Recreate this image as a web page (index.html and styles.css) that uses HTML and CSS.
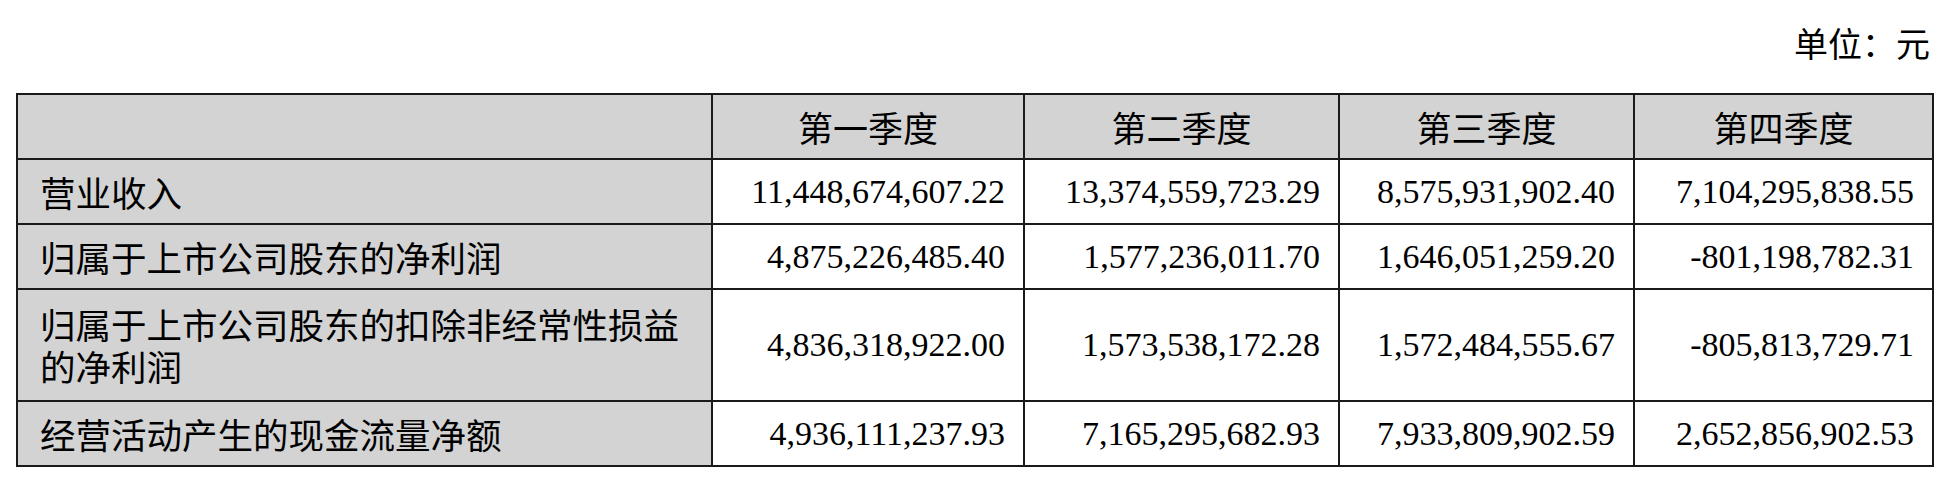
FILE: index.html
```html
<!DOCTYPE html>
<html lang="zh-CN">
<head>
<meta charset="utf-8">
<title>季度财务数据</title>
<link rel="stylesheet" href="styles.css">
</head>
<body>
<div class="page">
  <div class="unit">单位：元</div>
  <table class="fin">
    <colgroup>
      <col class="c-label">
      <col class="c-q1">
      <col class="c-q2">
      <col class="c-q3">
      <col class="c-q4">
    </colgroup>
    <thead>
      <tr>
        <th class="label"></th>
        <th>第一季度</th>
        <th>第二季度</th>
        <th>第三季度</th>
        <th>第四季度</th>
      </tr>
    </thead>
    <tbody>
      <tr>
        <td class="label">营业收入</td>
        <td class="num">11,448,674,607.22</td>
        <td class="num">13,374,559,723.29</td>
        <td class="num">8,575,931,902.40</td>
        <td class="num">7,104,295,838.55</td>
      </tr>
      <tr>
        <td class="label">归属于上市公司股东的净利润</td>
        <td class="num">4,875,226,485.40</td>
        <td class="num">1,577,236,011.70</td>
        <td class="num">1,646,051,259.20</td>
        <td class="num">-801,198,782.31</td>
      </tr>
      <tr class="tall">
        <td class="label">归属于上市公司股东的扣除非经常性损益的净利润</td>
        <td class="num">4,836,318,922.00</td>
        <td class="num">1,573,538,172.28</td>
        <td class="num">1,572,484,555.67</td>
        <td class="num">-805,813,729.71</td>
      </tr>
      <tr>
        <td class="label">经营活动产生的现金流量净额</td>
        <td class="num">4,936,111,237.93</td>
        <td class="num">7,165,295,682.93</td>
        <td class="num">7,933,809,902.59</td>
        <td class="num">2,652,856,902.53</td>
      </tr>
    </tbody>
  </table>
</div>
</body>
</html>
```

FILE: styles.css
```css
html, body {
  margin: 0;
  padding: 0;
  background: #ffffff;
}

.page {
  padding: 0 18px 0 16px;
  font-family: "Noto Sans CJK SC", "Liberation Serif", sans-serif;
  color: #000;
}

.unit {
  text-align: right;
  font-size: 34px;
  line-height: 42px;
  padding-top: 22px;
  padding-right: 2px;
  margin-bottom: 29px;
}

.fin {
  width: 100%;
  border-collapse: collapse;
  table-layout: fixed;
  border: 2px solid #111;
}

.c-label { width: 695px; }
.c-q1 { width: 312px; }
.c-q2 { width: 315px; }
.c-q3 { width: 295px; }
.c-q4 { width: 299px; }

.fin th,
.fin td {
  border: 2px solid #1a1a1a;
  padding: 11px 18px;
  line-height: 41px;
  font-weight: normal;
  vertical-align: middle;
}

.fin th {
  background: #d3d3d3;
  font-size: 35px;
  text-align: center;
}

.fin td.label {
  background: #d3d3d3;
  font-size: 35.5px;
  text-align: left;
  padding-left: 22px;
  padding-right: 24px;
}

.fin td.num {
  font-family: "Liberation Serif", "Times New Roman", serif;
  font-size: 34px;
  text-align: right;
  padding-right: 18px;
}

.fin tr.tall td {
  padding-top: 13px;
  padding-bottom: 13px;
  line-height: 42px;
}
```
